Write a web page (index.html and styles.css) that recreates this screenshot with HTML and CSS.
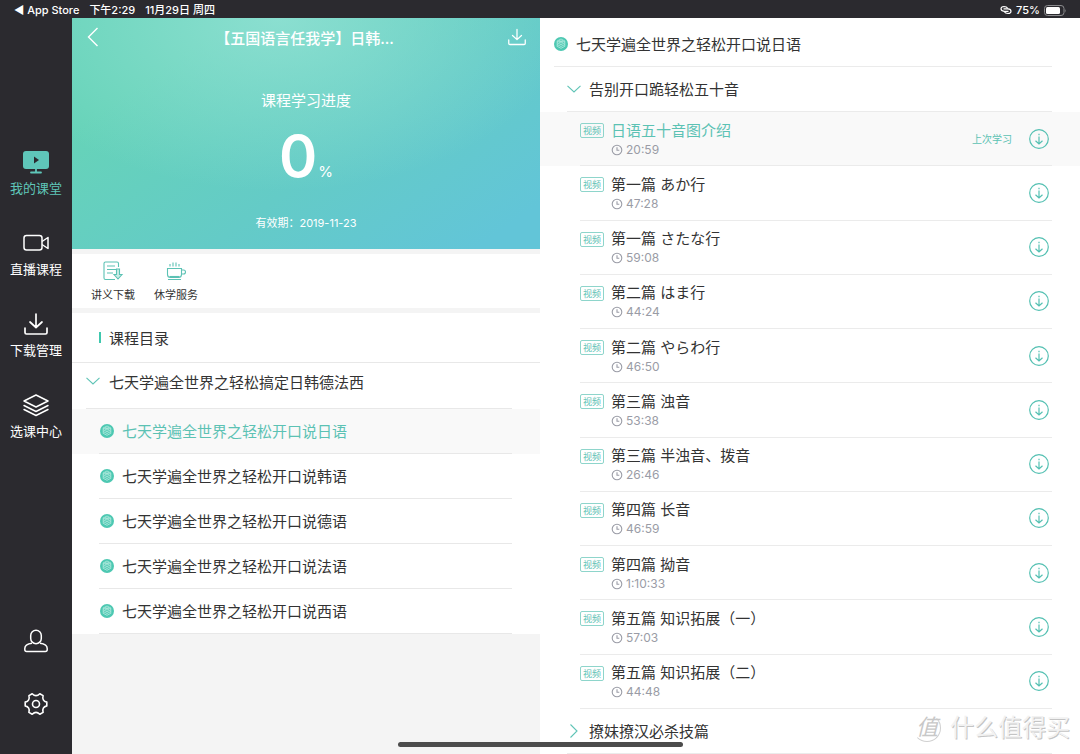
FILE: index.html
```html
<!DOCTYPE html>
<html lang="zh-CN">
<head>
<meta charset="utf-8">
<meta name="viewport" content="width=device-width, initial-scale=1">
<title>我的课堂</title>
<link rel="stylesheet" href="styles.css">
</head>
<body>
<svg class="defs" aria-hidden="true">
  <symbol id="stack" viewBox="0 0 14 14">
    <circle cx="7" cy="7" r="7" fill="#4dc8b2"/>
    <path d="M7 2 10.800 4 7 6 3.200 4ZM3.200 5.700 7 7.700l3.800-2M3.200 7.500 7 9.500l3.800-2M3.200 9.300 7 11.300l3.800-2M3.200 4v5.500M10.800 4v5.500M5 3.500 9 5M9 3.500 5 5" fill="none" stroke="#b5ebe0" stroke-width=".8"/>
  </symbol>
  <symbol id="clock" viewBox="0 0 12 12">
    <circle cx="6" cy="6" r="4.800" fill="none" stroke="#9a9ca6" stroke-width="1.100"/>
    <path d="M6 3.200V6.300H8.300" fill="none" stroke="#9a9ca6" stroke-width="1.100"/>
  </symbol>
  <symbol id="get" viewBox="0 0 20 20">
    <circle cx="10" cy="10" r="9.300" fill="none" stroke="#54c0b2" stroke-width="1.200"/>
    <path d="M10 4.800v1.400M10 7.500v7.300M6.500 11.800 10 15l3.500-3.200" fill="none" stroke="#54c0b2" stroke-width="1.200"/>
  </symbol>
  <symbol id="tray" viewBox="0 0 26 24">
    <path d="M13 2v13M7 10l6 5.500 6-5.500M2 16v4.500q0 1.500 1.500 1.500h19q1.500 0 1.500-1.500V16" fill="none" stroke="currentColor" stroke-width="1.700" stroke-linejoin="round" stroke-linecap="round"/>
  </symbol>
  <symbol id="down" viewBox="0 0 14 8">
    <path d="M.5 .8 7 7l6.500-6.200" fill="none" stroke="#5fc4b6" stroke-width="1.100"/>
  </symbol>
</svg>
<div class="app">
  <header class="status">
    <div class="status-left"><span>◀ App Store</span><span>下午2:29</span><span>11月29日 周四</span></div>
    <div class="status-right">
      <svg width="12" height="10" viewBox="0 0 12 10" fill="none" stroke="#fff" stroke-width="1.200"><path d="M8.500 6.300H4.200Q1 6 1 3.800T4 1.500q2.500 0 4 2"/><path d="M3.500 3.800H7.800Q11 4 11 6.200T8 8.500q-2.500 0-4-2"/></svg>
      <span>75%</span>
      <svg width="23" height="11" viewBox="0 0 23 11"><rect x=".5" y=".5" width="19.500" height="10" rx="3" fill="none" stroke="#8b8b8e"/><rect x="2" y="2" width="14" height="7" rx="1.500" fill="#fff"/><path d="M21.300 4v3.500q1.300-1.700 0-3.500" fill="#8b8b8e"/></svg>
    </div>
  </header>
  <div class="body">
    <nav class="side">
      <div class="side-group main-nav">
        <button class="nav on"><svg width="26" height="24" viewBox="0 0 26 24"><rect y="1" width="26" height="18" rx="3" fill="#5fc6b9"/><path d="M11 6.500v7l5-3.500z" fill="#2b2a2f"/><path d="M13 19v3M8 22.500h10" stroke="#5fc6b9" stroke-width="1.800" stroke-linecap="round"/></svg><span>我的课堂</span></button>
        <button class="nav"><svg width="26" height="24" viewBox="0 0 26 24" fill="none" stroke="#fff" stroke-width="1.500" stroke-linejoin="round"><rect x="1" y="4.500" width="18" height="14.500" rx="2.500"/><path d="M19 10.500 25 6.500v11L19 13.500"/></svg><span>直播课程</span></button>
        <button class="nav"><svg width="26" height="24"><use href="#tray"/></svg><span>下载管理</span></button>
        <button class="nav"><svg width="26" height="24" viewBox="0 0 26 24" fill="none" stroke="#fff" stroke-width="1.500" stroke-linejoin="round" stroke-linecap="round"><path d="M13 2 25 8 13 14 1 8ZM1 12.500l12 6 12-6M1 16.500l12 6 12-6"/></svg><span>选课中心</span></button>
      </div>
      <div class="side-group foot-nav">
        <button class="nav" aria-label="个人"><svg width="24" height="24" viewBox="0 0 24 24" fill="none" stroke="#fff" stroke-width="1.500"><rect x="6.700" y="1.200" width="10.600" height="13.500" rx="5.300"/><path d="M8 14.300C3 15 .8 16.800 .8 19.500v1.300q0 1.700 1.900 1.700h18.600q1.900 0 1.900-1.700v-1.300c0-2.700-2.200-4.500-7.200-5.200"/></svg></button>
        <button class="nav" aria-label="设置"><svg width="24" height="24" viewBox="0 0 24 24" fill="none" stroke="#fff" stroke-width="1.600" stroke-linejoin="round"><path d="M15.800 1.700Q12 5.500 8.200 1.700L4.900 3.600Q6.300 8.800 1.200 10.100V13.900Q6.300 15.200 4.900 20.400L8.200 22.300Q12 18.500 15.800 22.300L19.100 20.400Q17.700 15.200 22.800 13.900V10.100Q17.700 8.800 19.100 3.600Z"/><circle cx="12" cy="12" r="3.500"/></svg></button>
      </div>
    </nav>
    <main class="course">
      <section class="hero">
        <div class="hero-bar">
          <button aria-label="返回"><svg width="12" height="20" viewBox="0 0 12 20"><path d="M10.500 1 1.500 10l9 9" fill="none" stroke="#fff" stroke-width="1.400"/></svg></button>
          <h1>【五国语言任我学】日韩...</h1>
          <button aria-label="下载"><svg width="20" height="18"><use href="#tray"/></svg></button>
        </div>
        <p class="hero-label">课程学习进度</p>
        <p class="score"><strong>0</strong><span>%</span></p>
        <p class="valid">有效期：2019-11-23</p>
      </section>
      <section class="tools">
        <button><svg width="22" height="20" viewBox="0 0 22 20" fill="none" stroke="#5cc2b4" stroke-width="1.100"><path d="M16.500 6V2.500Q16.500 1 15 1H3.500Q2 1 2 2.500V17q0 1.500 1.500 1.500H13M5 5h8M5 8.500h9M5 12h6"/><path d="M14.500 8h3v5.500H20L16 18l-4-4.500h2.500z" fill="#c9ece6"/></svg><span>讲义下载</span></button>
        <button><svg width="22" height="20" viewBox="0 0 22 20" fill="none" stroke="#5cc2b4" stroke-width="1.100"><path d="M2.500 7.500h14v6q0 3-3 3h-8q-3 0-3-3zM16.500 9h2q2 0 2 2t-2 2h-2M3 18.500h13M5 5.500V3M8 5.500V1.500M11 5.500V1.500M14 5.500V3"/><path d="M4.500 15.500h10"/></svg><span>休学服务</span></button>
      </section>
      <section class="catalog">
        <h2>课程目录</h2>
        <button class="unit"><svg width="14" height="8"><use href="#down"/></svg><span>七天学遍全世界之轻松搞定日韩德法西</span></button>
        <ul class="topics">
          <li class="on"><button><svg width="14" height="14"><use href="#stack"/></svg><span>七天学遍全世界之轻松开口说日语</span></button></li>
          <li><button><svg width="14" height="14"><use href="#stack"/></svg><span>七天学遍全世界之轻松开口说韩语</span></button></li>
          <li><button><svg width="14" height="14"><use href="#stack"/></svg><span>七天学遍全世界之轻松开口说德语</span></button></li>
          <li><button><svg width="14" height="14"><use href="#stack"/></svg><span>七天学遍全世界之轻松开口说法语</span></button></li>
          <li><button><svg width="14" height="14"><use href="#stack"/></svg><span>七天学遍全世界之轻松开口说西语</span></button></li>
        </ul>
      </section>
    </main>
    <section class="detail">
      <h2 class="detail-title"><svg width="14" height="14"><use href="#stack"/></svg><span>七天学遍全世界之轻松开口说日语</span></h2>
      <button class="chapter"><svg width="14" height="8"><use href="#down"/></svg><span>告别开口跪轻松五十音</span></button>
      <ul class="lessons">
        <li class="on"><div class="lesson"><span class="tag">视频</span><div class="info"><h3>日语五十音图介绍</h3><p><svg width="12" height="12"><use href="#clock"/></svg>20:59</p></div><span class="last">上次学习</span><button aria-label="下载"><svg width="20" height="20"><use href="#get"/></svg></button></div></li>
        <li><div class="lesson"><span class="tag">视频</span><div class="info"><h3>第一篇 あか行</h3><p><svg width="12" height="12"><use href="#clock"/></svg>47:28</p></div><button aria-label="下载"><svg width="20" height="20"><use href="#get"/></svg></button></div></li>
        <li><div class="lesson"><span class="tag">视频</span><div class="info"><h3>第一篇 さたな行</h3><p><svg width="12" height="12"><use href="#clock"/></svg>59:08</p></div><button aria-label="下载"><svg width="20" height="20"><use href="#get"/></svg></button></div></li>
        <li><div class="lesson"><span class="tag">视频</span><div class="info"><h3>第二篇 はま行</h3><p><svg width="12" height="12"><use href="#clock"/></svg>44:24</p></div><button aria-label="下载"><svg width="20" height="20"><use href="#get"/></svg></button></div></li>
        <li><div class="lesson"><span class="tag">视频</span><div class="info"><h3>第二篇 やらわ行</h3><p><svg width="12" height="12"><use href="#clock"/></svg>46:50</p></div><button aria-label="下载"><svg width="20" height="20"><use href="#get"/></svg></button></div></li>
        <li><div class="lesson"><span class="tag">视频</span><div class="info"><h3>第三篇 浊音</h3><p><svg width="12" height="12"><use href="#clock"/></svg>53:38</p></div><button aria-label="下载"><svg width="20" height="20"><use href="#get"/></svg></button></div></li>
        <li><div class="lesson"><span class="tag">视频</span><div class="info"><h3>第三篇 半浊音、拨音</h3><p><svg width="12" height="12"><use href="#clock"/></svg>26:46</p></div><button aria-label="下载"><svg width="20" height="20"><use href="#get"/></svg></button></div></li>
        <li><div class="lesson"><span class="tag">视频</span><div class="info"><h3>第四篇 长音</h3><p><svg width="12" height="12"><use href="#clock"/></svg>46:59</p></div><button aria-label="下载"><svg width="20" height="20"><use href="#get"/></svg></button></div></li>
        <li><div class="lesson"><span class="tag">视频</span><div class="info"><h3>第四篇 拗音</h3><p><svg width="12" height="12"><use href="#clock"/></svg>1:10:33</p></div><button aria-label="下载"><svg width="20" height="20"><use href="#get"/></svg></button></div></li>
        <li><div class="lesson"><span class="tag">视频</span><div class="info"><h3>第五篇 知识拓展（一）</h3><p><svg width="12" height="12"><use href="#clock"/></svg>57:03</p></div><button aria-label="下载"><svg width="20" height="20"><use href="#get"/></svg></button></div></li>
        <li><div class="lesson"><span class="tag">视频</span><div class="info"><h3>第五篇 知识拓展（二）</h3><p><svg width="12" height="12"><use href="#clock"/></svg>44:48</p></div><button aria-label="下载"><svg width="20" height="20"><use href="#get"/></svg></button></div></li>
      </ul>
      <button class="chapter"><svg width="14" height="14" viewBox="0 0 14 14"><path d="M3.500 .5 10 7l-6.500 6.500" fill="none" stroke="#5fc4b6" stroke-width="1.100"/></svg><span>撩妹撩汉必杀技篇</span></button>
    </section>
  </div>
  <div class="watermark"><span class="seal">值</span><span>什么值得买</span></div>
  <div class="home-bar"></div>
</div>
</body>
</html>
```
FILE: styles.css
```css
* { box-sizing: border-box; }
body {
  margin: 0;
  font-family: Inter, "Noto Sans CJK SC", sans-serif;
  font-size: 15px;
  color: #333;
}
h1, h2, h3, p, ul { margin: 0; padding: 0; font-weight: 400; }
ul { list-style: none; }
button {
  margin: 0;
  padding: 0;
  border: 0;
  background: none;
  color: inherit;
  font: inherit;
  text-align: left;
  cursor: pointer;
}
svg { display: block; flex: none; }
.defs { position: absolute; width: 0; height: 0; }

.app {
  position: relative;
  display: flex;
  flex-direction: column;
  min-height: 100vh;
  background: #2b2a2f;
}
.status {
  display: flex;
  justify-content: space-between;
  height: 18px;
  padding: 2px 13px 0 14px;
  color: #fff;
  font-size: 11px;
  font-weight: 500;
  line-height: 17px;
}
.status-left { display: flex; gap: 10px; }
.status-right { display: flex; align-items: center; gap: 4px; }
.body {
  flex: 1;
  display: grid;
  grid-template-columns: 72px 13fr 15fr;
}

.side {
  display: flex;
  flex-direction: column;
  justify-content: space-between;
  padding: 132px 0 38px;
  color: #fff;
  font-size: 13px;
  line-height: 18px;
}
.side-group { display: flex; flex-direction: column; }
.main-nav { gap: 34px; }
.foot-nav { gap: 39px; }
.nav {
  display: flex;
  flex-direction: column;
  align-items: center;
  gap: 5px;
}
.nav.on { color: #5fc6b9; }

.course { background: #f4f4f4; }
.hero {
  height: 231px;
  background:
    radial-gradient(ellipse 62% 75% at 44% 0, rgba(148, 226, 214, .8), rgba(148, 226, 214, 0)),
    linear-gradient(145deg, #66d3b8 20%, #64cbc7 58%, #62c5d8 92%);
  color: #fff;
  text-align: center;
}
.hero-bar {
  display: flex;
  justify-content: space-between;
  align-items: center;
  height: 38px;
  padding: 0 13px 0 15px;
}
.hero-bar h1 { padding-left: 3px; font-size: 15px; font-weight: 500; }
.hero-label { padding-top: 35px; line-height: 20px; }
.score {
  display: flex;
  justify-content: center;
  align-items: baseline;
  gap: 1px;
  padding-top: 15px;
  font-size: 15px;
  line-height: 60px;
}
.score strong { font-size: 58px; font-weight: 600; }
.valid { padding-top: 13px; font-size: 11px; line-height: 16px; }

.tools {
  display: flex;
  gap: 19px;
  margin: 5px 0;
  height: 54px;
  padding: 7px 19px 0;
  background: #fff;
  font-size: 11px;
  line-height: 16px;
}
.tools button {
  display: flex;
  flex-direction: column;
  align-items: center;
  gap: 6px;
}
.catalog { background: #fff; }
.catalog h2 {
  display: flex;
  align-items: center;
  gap: 8px;
  height: 50px;
  padding-left: 27px;
  border-bottom: 1px solid #e8e8e8;
  font-size: 15px;
}
.catalog h2::before {
  content: "";
  width: 2px;
  height: 11px;
  background: #3fc8ae;
}
.unit {
  display: flex;
  align-items: center;
  gap: 9px;
  width: calc(100% - 42px);
  height: 46px;
  margin-left: 14px;
  padding-bottom: 9px;
  border-bottom: 1px solid #e8e8e8;
}
.topics .on { background: #f9f9f9; color: #5cc2b4; }
.topics button {
  display: flex;
  align-items: center;
  gap: 8px;
  width: calc(100% - 55px);
  height: 45px;
  margin-left: 27px;
  padding-left: 1px;
  border-bottom: 1px solid #e8e8e8;
}
.topics span, .detail-title span, .chapter span { padding-bottom: 2px; }

.detail {
  display: flex;
  flex-direction: column;
  background: #fff;
}
.detail-title, .chapter {
  display: flex;
  align-items: center;
  gap: 8px;
  height: 45px;
  margin-right: 28px;
  border-bottom: 1px solid #ebebeb;
  font-size: 15px;
}
.detail-title {
  height: 49px;
  margin-left: 14px;
  padding-top: 4px;
}
.chapter { margin-left: 27px; }
.lessons {
  flex: 1;
  display: flex;
  flex-direction: column;
}
.lessons li { flex: 1; display: flex; min-height: 54px; }
.lessons .on { background: #f9f9f9; }
.lessons .on h3, .last { color: #5cc2b4; }
.lesson {
  flex: 1;
  display: flex;
  align-items: center;
  margin: 0 28px 0 40px;
  padding-right: 3px;
  border-bottom: 1px solid #ebebeb;
}
.tag {
  align-self: flex-start;
  margin: 11px 7px 0 0;
  padding: 0 2px;
  border: 1px solid #8ed5cb;
  border-radius: 2px;
  color: #5cc2b4;
  font-size: 9px;
  line-height: 13px;
}
.info { flex: 1; padding-top: 2px; }
.info h3 { font-size: 15px; line-height: 20px; }
.info p {
  display: flex;
  align-items: center;
  gap: 3px;
  color: #9a9ca6;
  font-size: 12px;
  line-height: 18px;
}
.last { margin-right: 17px; font-size: 10px; }

.watermark {
  position: absolute;
  right: 10px;
  bottom: 10px;
  display: flex;
  align-items: center;
  gap: 9px;
  color: #f2f2f2;
  font-size: 24px;
  line-height: 32px;
  text-shadow: 1px 1px 0 #c4c4c4;
}
.seal {
  width: 28px;
  height: 28px;
  border-radius: 50%;
  border: 1px solid #d0d0d0;
  border-top-color: transparent;
  border-left-color: transparent;
  color: #c8c8c8;
  font-size: 22px;
  font-style: italic;
  line-height: 24px;
  text-align: center;
  text-shadow: none;
}
.home-bar {
  position: absolute;
  bottom: 7px;
  left: 50%;
  width: 285px;
  height: 5px;
  margin-left: -142px;
  border-radius: 3px;
  background: #4c4c4c;
}
```
